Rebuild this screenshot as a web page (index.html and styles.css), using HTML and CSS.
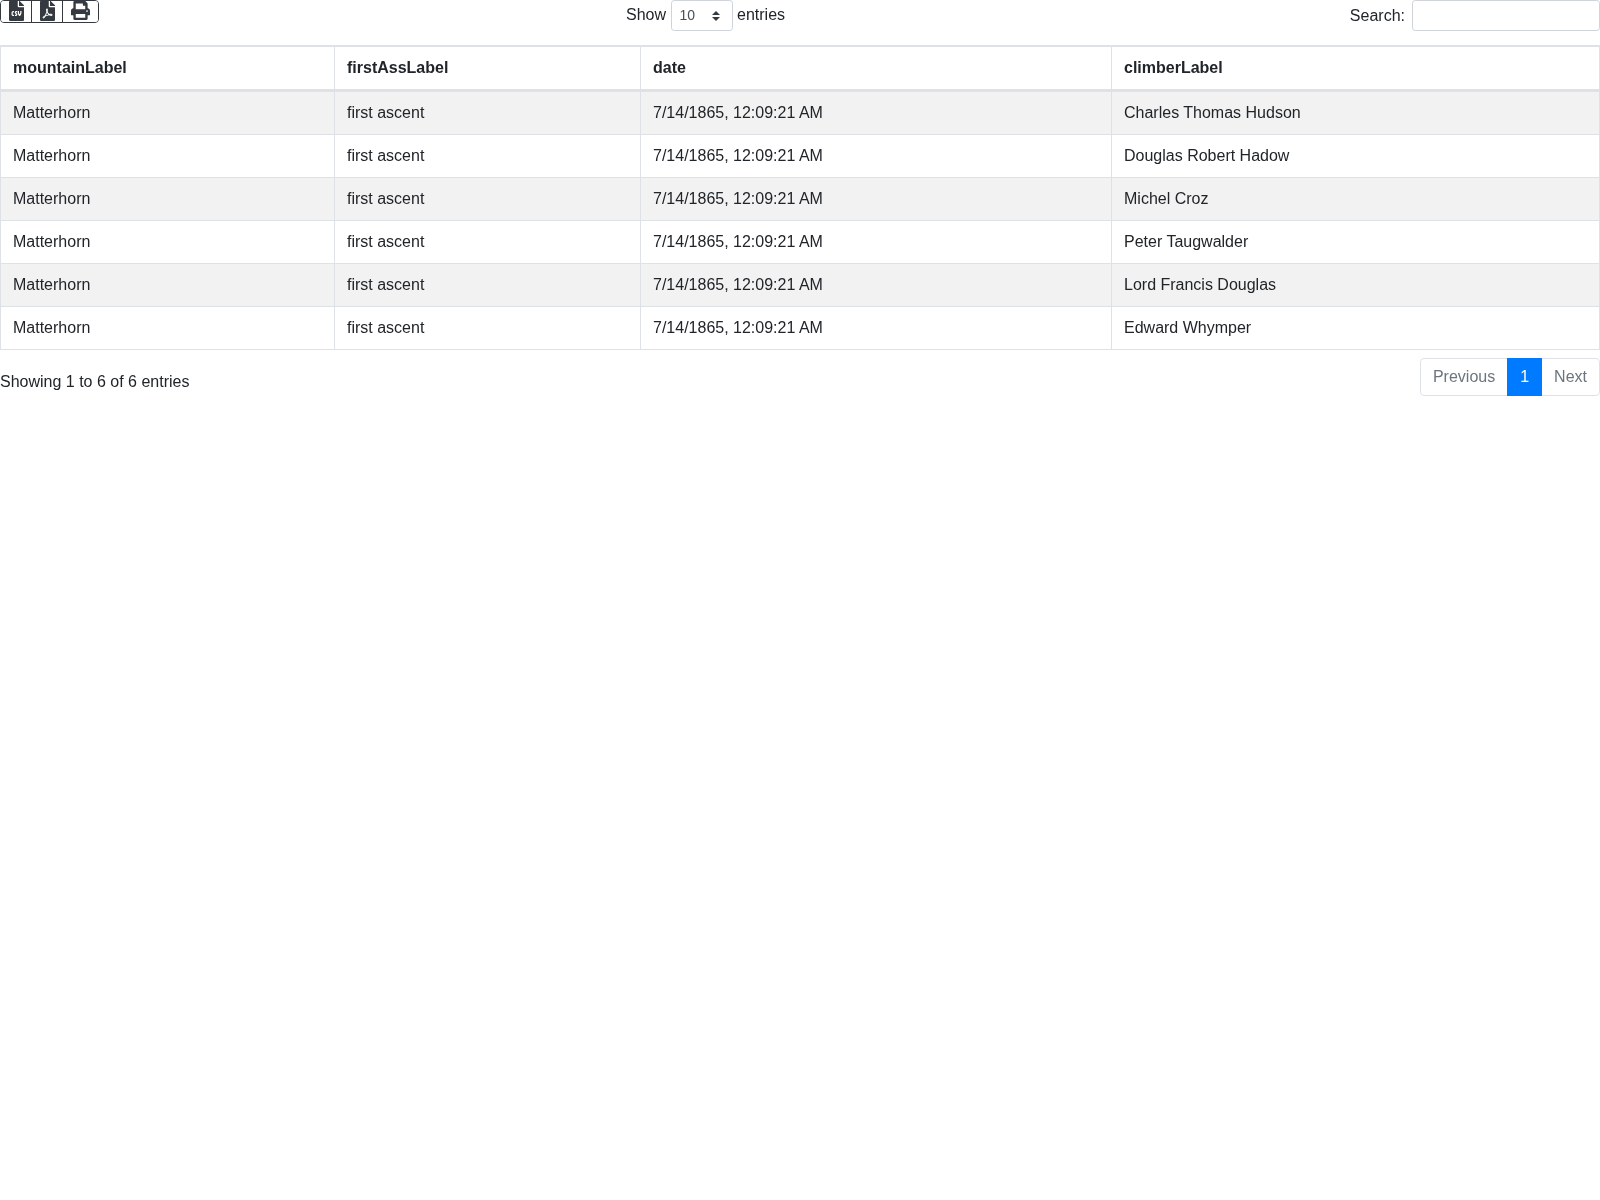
FILE: index.html
```html
<!DOCTYPE html>
<html lang="en">
<head>
<meta charset="utf-8">
<title>Matterhorn first ascent</title>
<link rel="stylesheet" href="styles.css">
</head>
<body>
<div class="toolbar">
  <div class="btn-group">
    <button class="btn" type="button" aria-label="CSV">
      <svg class="icon-file" viewBox="0 0 384 512"><path d="M224 136V0H24C10.7 0 0 10.7 0 24v464c0 13.3 10.7 24 24 24h336c13.3 0 24-10.7 24-24V160H248c-13.2 0-24-10.8-24-24zm-96 144c0 4.42-3.58 8-8 8h-8c-8.84 0-16 7.16-16 16v32c0 8.84 7.16 16 16 16h8c4.42 0 8 3.58 8 8v16c0 4.42-3.58 8-8 8h-8c-26.51 0-48-21.49-48-48v-32c0-26.51 21.49-48 48-48h8c4.42 0 8 3.58 8 8v16zm44.27 104H160c-4.42 0-8-3.58-8-8v-16c0-4.42 3.58-8 8-8h12.27c5.95 0 10.41-3.5 10.41-6.62 0-1.3-.75-2.66-2.12-3.84l-21.89-18.77c-8.47-7.22-13.33-17.48-13.33-28.14 0-21.3 19.02-38.62 42.41-38.62H200c4.42 0 8 3.58 8 8v16c0 4.42-3.58 8-8 8h-12.27c-5.95 0-10.41 3.5-10.41 6.62 0 1.3.75 2.66 2.12 3.84l21.89 18.77c8.47 7.22 13.33 17.48 13.33 28.14.01 21.29-19 38.62-42.39 38.62zM256 264v20.8c0 20.27 5.7 40.17 16 56.88 10.3-16.7 16-36.61 16-56.88V264c0-4.42 3.58-8 8-8h16c4.42 0 8 3.58 8 8v20.8c0 35.48-12.88 68.89-36.28 94.09-3.02 3.25-7.27 5.11-11.72 5.11s-8.7-1.86-11.72-5.11c-23.4-25.2-36.28-58.61-36.28-94.09V264c0-4.42 3.58-8 8-8h16c4.42 0 8 3.58 8 8zm121-159L279.1 7c-4.5-4.5-10.6-7-17-7H256v128h128v-6.1c0-6.3-2.5-12.4-7-16.9z"/></svg>
    </button>
    <button class="btn" type="button" aria-label="PDF">
      <svg class="icon-file" viewBox="0 0 384 512"><path d="M181.9 256.1c-5-16-4.9-46.9-2-46.9 8.4 0 7.6 36.9 2 46.9zm-1.7 47.2c-7.7 20.2-17.3 43.3-28.4 62.7 18.3-7 39-17.2 62.9-21.9-12.7-9.6-24.9-23.4-34.5-40.8zM86.1 428.1c0 .8 13.2-5.4 34.9-40.2-6.7 6.3-29.1 24.5-34.9 40.2zM248 160h136v328c0 13.3-10.7 24-24 24H24c-13.3 0-24-10.7-24-24V24C0 10.7 10.7 0 24 0h200v136c0 13.2 10.8 24 24 24zm-8 171.8c-20-12.2-33.3-29-42.7-53.8 4.5-18.5 11.6-46.6 6.2-64.2-4.7-29.4-42.4-26.5-47.8-6.8-5 18.3-.4 44.1 8.1 77-11.6 27.6-28.7 64.6-40.8 85.8-.1 0-.1.1-.2.1-27.1 13.9-73.6 44.5-54.5 68 5.6 6.9 16 10 21.5 10 17.9 0 35.7-18 61.1-61.8 25.8-8.5 54.1-19.1 79-23.2 21.7 11.8 47.1 19.5 64 19.5 29.2 0 31.2-32 19.7-43.4-13.9-13.6-54.3-9.7-73.6-7.2zM377 105L279 7c-4.5-4.5-10.6-7-17-7h-6v128h128v-6.1c0-6.3-2.5-12.4-7-16.9zm-74.1 255.3c4.1-2.7-2.5-11.9-42.8-9 37.1 15.8 42.8 9 42.8 9z"/></svg>
    </button>
    <button class="btn btn-print" type="button" aria-label="Print">
      <svg class="icon-print" viewBox="0 0 512 512"><path d="M448 192V77.25c0-8.49-3.37-16.62-9.37-22.63L393.37 9.37c-6-6-14.14-9.37-22.63-9.37H96C78.33 0 64 14.33 64 32v160c-35.35 0-64 28.65-64 64v112c0 8.84 7.16 16 16 16h48v96c0 17.67 14.33 32 32 32h320c17.67 0 32-14.33 32-32v-96h48c8.84 0 16-7.16 16-16V256c0-35.35-28.65-64-64-64zm-64 256H128v-96h256v96zm0-224H128V64h192v48c0 8.84 7.16 16 16 16h48v96zm48 72c-13.25 0-24-10.75-24-24 0-13.26 10.75-24 24-24s24 10.74 24 24c0 13.25-10.75 24-24 24z"/></svg>
    </button>
  </div>
  <label class="length">Show
    <span class="select"><span>10</span>
      <svg class="select-arrows" viewBox="0 0 4 5"><path d="M2 0L0 2h4zm0 5L0 3h4z"/></svg>
    </span>
    entries</label>
  <label class="search">Search: <span class="search-input"></span></label>
</div>

<table class="data">
  <colgroup><col class="c1"><col class="c2"><col class="c3"><col class="c4"></colgroup>
  <thead>
    <tr><th>mountainLabel</th><th>firstAssLabel</th><th>date</th><th>climberLabel</th></tr>
  </thead>
  <tbody>
    <tr><td>Matterhorn</td><td>first ascent</td><td>7/14/1865, 12:09:21 AM</td><td>Charles Thomas Hudson</td></tr>
    <tr><td>Matterhorn</td><td>first ascent</td><td>7/14/1865, 12:09:21 AM</td><td>Douglas Robert Hadow</td></tr>
    <tr><td>Matterhorn</td><td>first ascent</td><td>7/14/1865, 12:09:21 AM</td><td>Michel Croz</td></tr>
    <tr><td>Matterhorn</td><td>first ascent</td><td>7/14/1865, 12:09:21 AM</td><td>Peter Taugwalder</td></tr>
    <tr><td>Matterhorn</td><td>first ascent</td><td>7/14/1865, 12:09:21 AM</td><td>Lord Francis Douglas</td></tr>
    <tr><td>Matterhorn</td><td>first ascent</td><td>7/14/1865, 12:09:21 AM</td><td>Edward Whymper</td></tr>
  </tbody>
</table>

<div class="footer">
  <div class="info">Showing 1 to 6 of 6 entries</div>
  <ul class="pagination">
    <li class="page-link first">Previous</li>
    <li class="page-link active">1</li>
    <li class="page-link last">Next</li>
  </ul>
</div>
</body>
</html>
```
FILE: styles.css
```css
* { box-sizing: border-box; }
html { background: #fff; }
body {
  margin: 0;
  padding: 0;
  font-family: "Liberation Sans", Arial, sans-serif;
  font-size: 16px;
  color: #212529;
  will-change: opacity;
}
.toolbar {
  display: grid;
  grid-template-columns: 626px 1fr auto;
  align-items: start;
  height: 45px;
}
.btn-group {
  display: inline-flex;
  width: 99px;
  height: 23px;
  border: 1px solid #343a40;
  border-radius: 4px;
  overflow: hidden;
}
.btn {
  flex: none;
  width: 31px;
  height: 21px;
  padding: 0 0 0 7.5px;
  border: 0;
  border-right: 1px solid #343a40;
  background: #fff;
  display: flex;
  align-items: flex-start;
  justify-content: flex-start;
  fill: #343a40;
}
.btn-print { border-right: 0; flex: 1; padding-left: 7.5px; }
.icon-file { width: 15px; height: 20px; margin-top: -0.5px; display: block; }
.icon-print { width: 19px; height: 19px; display: block; }
.length {
  display: flex;
  align-items: flex-start;
  gap: 5px;
  line-height: 29px;
}
.select {
  display: flex;
  align-items: center;
  justify-content: space-between;
  width: 62px;
  height: 31px;
  margin-right: -1px;
  padding: 0 12px 0 7.5px;
  border: 1px solid #ced4da;
  border-radius: 3.2px;
  font-size: 14px;
  color: #495057;
}
.select-arrows { width: 8px; height: 10px; fill: #343a40; display: block; }
.search {
  display: flex;
  align-items: flex-start;
  gap: 7px;
  line-height: 31px;
}
.search-input {
  display: block;
  width: 188px;
  height: 31px;
  border: 1px solid #ced4da;
  border-radius: 3.2px;
}
.data {
  width: 1600px;
  table-layout: fixed;
  border-collapse: separate;
  border-spacing: 0;
  border: 1px solid #dee2e6;
  border-top-width: 2px;
}
.c1 { width: 333px; }
.c2 { width: 306px; }
.c3 { width: 471px; }
.data th, .data td {
  padding: 12px;
  line-height: 18px;
  text-align: left;
  border-left: 1px solid #dee2e6;
  border-top: 1px solid #dee2e6;
}
.data th:first-child, .data td:first-child { border-left: 0; }
.data th {
  font-weight: 700;
  border-top: 0;
  border-bottom: 2px solid #dee2e6;
}
.data tbody tr:nth-child(odd) td { background: #f2f2f2; }
.footer {
  display: flex;
  justify-content: space-between;
  align-items: flex-start;
  margin-top: 8px;
}
.info { padding-top: 15px; line-height: 18px; }
.pagination {
  display: flex;
  margin: 0;
  padding: 0;
  list-style: none;
}
.page-link {
  padding: 8px 12px;
  line-height: 20px;
  border: 1px solid #dee2e6;
  margin-left: -1px;
  color: #6c757d;
  background: #fff;
}
.page-link.first { border-radius: 4px 0 0 4px; }
.page-link.last { border-radius: 0 4px 4px 0; }
.page-link.active { background: #007bff; border-color: #007bff; color: #fff; z-index: 1; }
```
